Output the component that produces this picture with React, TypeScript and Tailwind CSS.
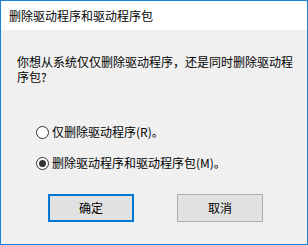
import React, { useState } from 'react';

const font = { fontFamily: '"Noto Sans CJK SC", "Noto Sans", sans-serif' };

type Choice = 'driver' | 'all';

const Radio: React.FC<{ checked: boolean; label: string; onClick: () => void }> = ({ checked, label, onClick }) => (
  <button type="button" onClick={onClick} className="flex items-center h-4 text-left">
    <span className="flex items-center justify-center w-[13px] h-[13px] rounded-full border border-[#333] bg-white">
      {checked && <span className="w-[7px] h-[7px] rounded-full bg-[#333]" />}
    </span>
    <span className="ml-[3px] text-[12px] leading-4 text-black">{label}</span>
  </button>
);

export default function App() {
  const [choice, setChoice] = useState<Choice>('all');

  return (
    <div
      className="w-[308px] h-[245px] flex flex-col border border-[#1883d7] bg-[#f0f0f0] text-black"
      style={font}
    >
      {/* 标题栏 */}
      <div className="h-[29px] flex items-center pl-2 bg-white text-[12px]">
        删除驱动程序和驱动程序包
      </div>

      {/* 内容区域 */}
      <p className="mt-[24px] pl-4 w-[300px] text-[12px] leading-[15px]">
        你想从系统仅仅删除驱动程序，还是同时删除驱动程序包?
      </p>

      <div className="mt-[40px] pl-[35px] flex flex-col gap-[15px]">
        <Radio
          checked={choice === 'driver'}
          label="仅删除驱动程序(R)。"
          onClick={() => setChoice('driver')}
        />
        <Radio
          checked={choice === 'all'}
          label="删除驱动程序和驱动程序包(M)。"
          onClick={() => setChoice('all')}
        />
      </div>

      {/* 按钮 */}
      <div className="mt-[23px] pl-[47px] flex gap-[43px]">
        <button className="w-[86px] h-[28px] border-2 border-[#0078d7] bg-[#e1e1e1] text-[12px]">
          确定
        </button>
        <button className="w-[86px] h-[28px] border border-[#adadad] bg-[#e1e1e1] text-[12px]">
          取消
        </button>
      </div>
    </div>
  );
}
